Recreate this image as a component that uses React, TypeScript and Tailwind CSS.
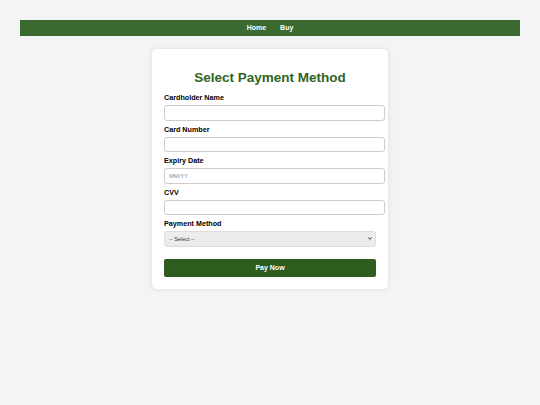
import React from 'react';

const fields = [
  { label: 'Cardholder Name', placeholder: '' },
  { label: 'Card Number', placeholder: '' },
  { label: 'Expiry Date', placeholder: 'MM/YY' },
  { label: 'CVV', placeholder: '' },
];

export default function App() {
  return (
    <div className="min-h-[405px] bg-[#f4f4f4] pt-[20px] px-[20px] font-['Liberation_Sans',Arial,sans-serif]">
      <nav className="h-[16px] bg-[#3b6a30] flex items-center justify-center gap-[14px]">
        <a className="text-[7px] font-bold text-white">Home</a>
        <a className="text-[7px] font-bold text-white">Buy</a>
      </nav>

      <main className="mt-[13px] mx-auto w-[236px] bg-white rounded-[5px] shadow-[0_0_6px_rgba(0,0,0,0.1)] px-[12px] pt-[12px] pb-[12px]">
        <h2 className="mt-[9px] mb-[7px] text-center text-[13.5px] leading-[16px] font-bold text-[#2f6424]">
          Select Payment Method
        </h2>

        <form onSubmit={(e) => e.preventDefault()}>
          {fields.map((f) => (
            <div key={f.label} className="mb-[4px]">
              <label className="block text-[7.2px] leading-[10.5px] font-bold text-black mb-[1.5px]">
                {f.label}
              </label>
              <input
                type="text"
                placeholder={f.placeholder}
                className="block w-[221px] h-[15.5px] px-[4px] border border-[#cccccc] rounded-[3px] bg-white text-[5.8px] placeholder:text-[#8a8a8a]"
              />
            </div>
          ))}

          <div>
            <label className="block text-[7.2px] leading-[10.5px] font-bold text-black mb-[1px]">
              Payment Method
            </label>
            <div className="relative">
              <select className="appearance-none block w-full h-[16.5px] px-[4px] border border-[#dddddd] rounded-[3px] bg-[#ececec] text-[5.5px] text-[#333]">
                <option>-- Select --</option>
                <option>Credit Card</option>
                <option>Debit Card</option>
              </select>
              <svg
                className="absolute right-[4px] top-[6.5px] pointer-events-none"
                width="4"
                height="3"
                viewBox="0 0 8 6"
              >
                <path d="M1 1l3 3.5L7 1" fill="none" stroke="#222" strokeWidth="1.8" />
              </svg>
            </div>
          </div>

          <button
            type="submit"
            className="mt-[12px] block w-full h-[18px] rounded-[2px] bg-[#2e5c1e] text-white text-[7px] font-bold"
          >
            Pay Now
          </button>
        </form>
      </main>
    </div>
  );
}
